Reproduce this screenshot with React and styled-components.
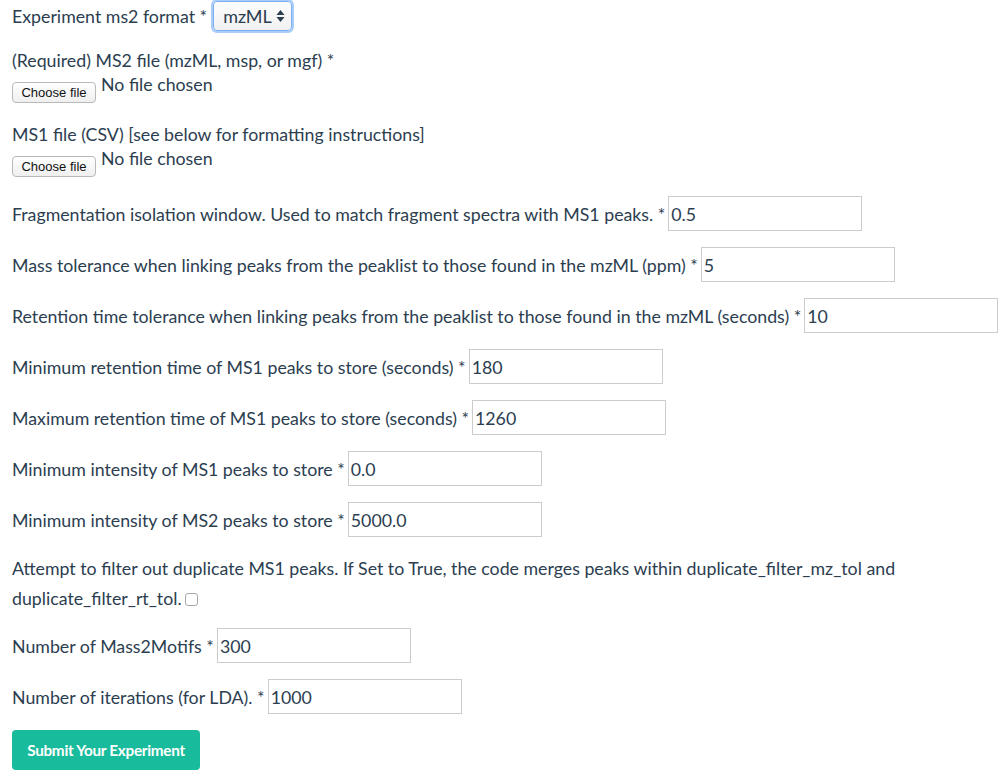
import React from 'react'
import styled, { createGlobalStyle } from 'styled-components'

const GlobalStyle = createGlobalStyle`
  body {
    margin: 0;
    background: #ffffff;
    font-family: Lato, "Noto Sans", sans-serif;
    color: #2c3e50;
  }
`

const Page = styled.form`
  padding: 0 8px 0 12px;
  font-size: 17.75px;
`

const Field = styled.div`
  margin-bottom: ${(p) => p.$gap || 16}px;
`

const Row = styled.div`
  display: flex;
  align-items: center;
  gap: 3px;
  height: ${(p) => p.$h || 35}px;
`

const Label = styled.label`
  line-height: 24px;
  white-space: nowrap;
`

const Stacked = styled.div`
  line-height: 24px;
`

const TextInput = styled.input`
  box-sizing: border-box;
  width: 194px;
  height: 35px;
  border: 1px solid #cccccc;
  border-radius: 0;
  padding: 0 2px;
  font-family: inherit;
  font-size: 17.75px;
  color: #2c3e50;
  background: #fff;
  outline: none;
`

const SelectBox = styled.div`
  display: inline-flex;
  align-items: center;
  gap: 4px;
  box-sizing: border-box;
  height: 30px;
  margin-left: 3px;
  padding: 0 6px 0 9px;
  border: 1px solid #7aaef0;
  border-radius: 4px;
  box-shadow: 0 0 0 2px #a8cdf7;
  background: linear-gradient(#fdfdfd, #f1f1f1);
  font-size: 18px;
`

const FileRow = styled.div`
  display: flex;
  align-items: flex-start;
  gap: 5px;
  height: 34px;
`

const FileButton = styled.button`
  box-sizing: border-box;
  margin-top: 10px;
  width: 84px;
  height: 21px;
  padding: 0;
  border: 1px solid #b9b9b9;
  border-radius: 4px;
  background: linear-gradient(#ffffff, #efefef);
  font-family: "Liberation Sans", Arial, sans-serif;
  font-size: 13px;
  color: #111;
`

const FileStatus = styled.span`
  line-height: 24px;
`

const Paragraph = styled.div`
  line-height: 30px;
  max-width: 940px;
`

const Check = styled.input`
  appearance: none;
  box-sizing: border-box;
  width: 13px;
  height: 13px;
  margin: 0 0 0 3px;
  vertical-align: -1px;
  border: 1px solid #a9a9a9;
  border-radius: 3px;
  background: #fff;
`

const Submit = styled.button`
  box-sizing: border-box;
  width: 188px;
  height: 40px;
  border: none;
  border-radius: 4px;
  background: #18bc9c;
  color: #ffffff;
  font-family: Lato, "Noto Sans", sans-serif;
  font-weight: 700;
  font-size: 15.3px;
  letter-spacing: -0.3px;
`

const Arrows = () => (
  <svg width="9" height="14" viewBox="0 0 9 14">
    <path d="M4.5 1 L8.5 6 H0.5 Z" fill="#2c3e50" />
    <path d="M4.5 13 L8.5 8 H0.5 Z" fill="#2c3e50" />
  </svg>
)

const fields = [
  ['Fragmentation isolation window. Used to match fragment spectra with MS1 peaks.', '0.5'],
  ['Mass tolerance when linking peaks from the peaklist to those found in the mzML (ppm)', '5'],
  ['Retention time tolerance when linking peaks from the peaklist to those found in the mzML (seconds)', '10'],
  ['Minimum retention time of MS1 peaks to store (seconds)', '180'],
  ['Maximum retention time of MS1 peaks to store (seconds)', '1260'],
  ['Minimum intensity of MS1 peaks to store', '0.0'],
  ['Minimum intensity of MS2 peaks to store', '5000.0'],
]

const NumberField = ({ label, value }) => (
  <Field>
    <Row>
      <Label>{label} *</Label>
      <TextInput defaultValue={value} />
    </Row>
  </Field>
)

const FileField = ({ label }) => (
  <Field>
    <Stacked>{label}</Stacked>
    <FileRow>
      <FileButton type="button">Choose file</FileButton>
      <FileStatus>No file chosen</FileStatus>
    </FileRow>
  </Field>
)

export default function App() {
  return (
    <>
      <GlobalStyle />
      <Page onSubmit={(e) => e.preventDefault()}>
        <Field>
          <Row $h={32}>
            <Label>Experiment ms2 format *</Label>
            <SelectBox>
              mzML <Arrows />
            </SelectBox>
          </Row>
        </Field>
        <FileField label="(Required) MS2 file (mzML, msp, or mgf) *" />
        <FileField label="MS1 file (CSV) [see below for formatting instructions]" />
        {fields.map(([label, value]) => (
          <NumberField key={label} label={label} value={value} />
        ))}
        <Field $gap={15}>
          <Paragraph>
            Attempt to filter out duplicate MS1 peaks. If Set to True, the code merges peaks within
            duplicate_filter_mz_tol and duplicate_filter_rt_tol.
            <Check type="checkbox" />
          </Paragraph>
        </Field>
        <NumberField label="Number of Mass2Motifs" value="300" />
        <NumberField label="Number of iterations (for LDA)." value="1000" />
        <Submit type="submit">Submit Your Experiment</Submit>
      </Page>
    </>
  )
}
